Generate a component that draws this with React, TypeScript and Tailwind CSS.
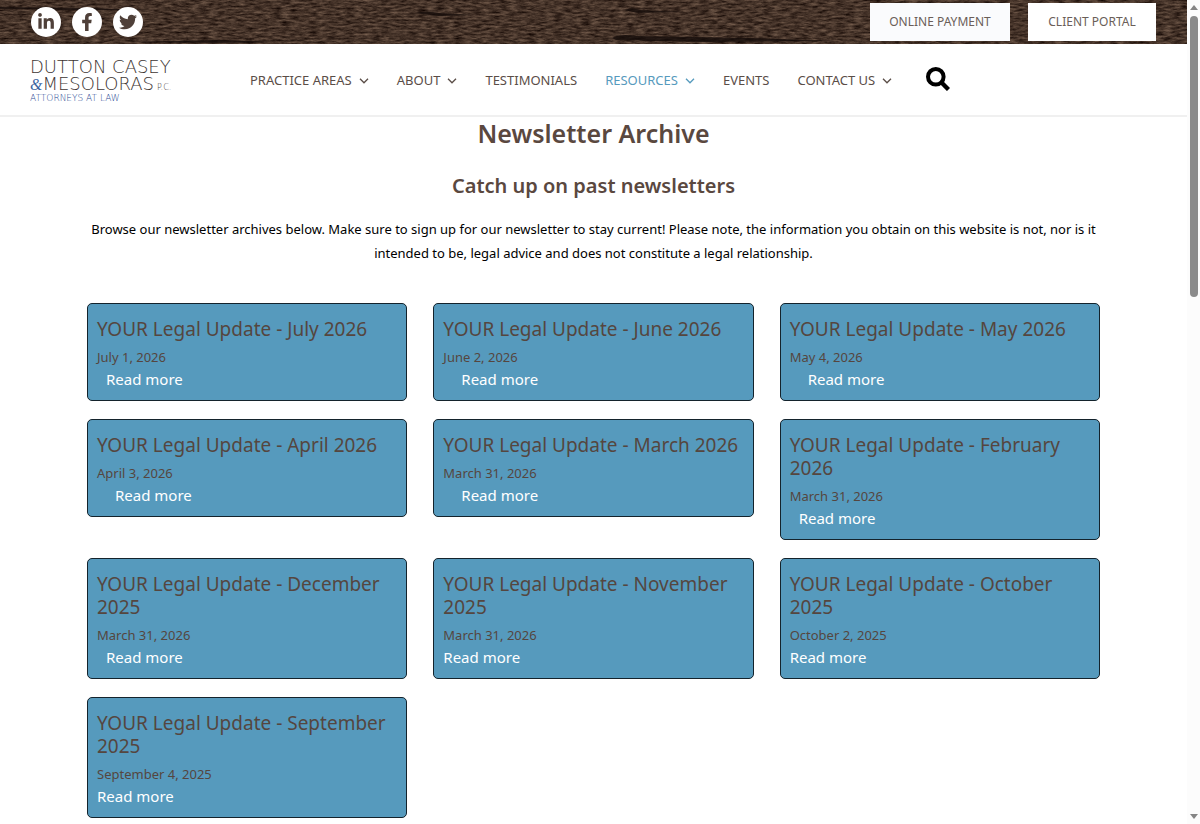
import { FaFacebookF, FaLinkedinIn, FaTwitter } from "react-icons/fa";

type NavItem = { label: string; menu?: boolean; active?: boolean };
type Issue = { month: string; date: string; indent: string };

const navItems: NavItem[] = [
  { label: "PRACTICE AREAS", menu: true },
  { label: "ABOUT", menu: true },
  { label: "TESTIMONIALS" },
  { label: "RESOURCES", menu: true, active: true },
  { label: "EVENTS" },
  { label: "CONTACT US", menu: true },
];

const issues: Issue[] = [
  { month: "July 2026", date: "July 1, 2026", indent: "pl-[9px]" },
  { month: "June 2026", date: "June 2, 2026", indent: "pl-[18px]" },
  { month: "May 2026", date: "May 4, 2026", indent: "pl-[18px]" },
  { month: "April 2026", date: "April 3, 2026", indent: "pl-[18px]" },
  { month: "March 2026", date: "March 31, 2026", indent: "pl-[18px]" },
  { month: "February 2026", date: "March 31, 2026", indent: "pl-[9px]" },
  { month: "December 2025", date: "March 31, 2026", indent: "pl-[9px]" },
  { month: "November 2025", date: "March 31, 2026", indent: "pl-0" },
  { month: "October 2025", date: "October 2, 2025", indent: "pl-0" },
  { month: "September 2025", date: "September 4, 2025", indent: "pl-0" },
];

const socials = [
  { name: "LinkedIn", Icon: FaLinkedinIn },
  { name: "Facebook", Icon: FaFacebookF },
  { name: "Twitter", Icon: FaTwitter },
];

function WoodGrain() {
  return (
    <svg className="absolute inset-0 h-full w-full" aria-hidden="true">
      <filter id="grain" x="0" y="0" width="100%" height="100%" colorInterpolationFilters="sRGB">
        <feTurbulence type="fractalNoise" baseFrequency="0.11 0.5" numOctaves="4" seed="8" />
        <feColorMatrix values="0.48 0 0 0 0.03  0.42 0 0 0 -0.01  0.36 0 0 0 -0.02  0 0 0 0 1" />
      </filter>
      <rect width="100%" height="100%" filter="url(#grain)" />
      <g fill="#120a08" opacity="0.75">
        <path d="M415 13q12-3 24 0l35 2-36 1z" />
        <path d="M612 38q8-5 24-2l110 2 90 3-130 1-90-2z" />
        <path d="M624 10q8-3 16 0l44 2-46 1z" />
        <path d="M0 7l90 1 60 2-80 0-70-1zM130 42l90-2 60 2-60 1z" />
      </g>
    </svg>
  );
}

function Chevron() {
  return (
    <svg viewBox="0 0 10 6" className="h-[6px] w-[10px]" fill="none" stroke="currentColor" strokeWidth="1.3" aria-hidden="true">
      <path d="M1 .8 5 4.8 9 .8" />
    </svg>
  );
}

function Header() {
  return (
    <header>
      <div className="relative bg-[#3f2d25]">
        <WoodGrain />
        <div className="relative flex h-11 items-center justify-between pr-[31px] pl-[31px]">
          <div className="flex gap-[11px]">
            {socials.map(({ name, Icon }) => (
              <a key={name} href="#" aria-label={name} className="flex size-[30px] items-center justify-center rounded-full bg-white text-[#4f4039]">
                <Icon className="size-[18px]" />
              </a>
            ))}
          </div>
          <div className="flex gap-[18px] text-[12px] text-[#6a5e58]">
            <a href="#" className="flex h-[38px] w-[140px] items-center justify-center bg-[#fafbfd]">ONLINE PAYMENT</a>
            <a href="#" className="flex h-[38px] w-[128px] items-center justify-center bg-white">CLIENT PORTAL</a>
          </div>
        </div>
      </div>
      <div className="flex items-center border-b-2 border-[#f0f0f0] pt-[14px] pb-[11px] pl-[30px]">
        <a href="#" className="w-[220px] shrink-0 font-['DejaVu_Sans'] font-extralight text-[#3d3532]">
          <span className="block text-[18px] leading-[17px] whitespace-nowrap">DUTTON CASEY</span>
          <span className="flex h-[17px] items-baseline text-[18px] leading-[17px]">
            <span className="font-['Liberation_Serif'] text-[16px] text-[#3d64a0] italic">&amp;</span>
            MESOLORAS
            <span className="pl-[3px] text-[8px]">P.C.</span>
          </span>
          <span className="block text-[9px] leading-[12px] text-[#2a4a94]">ATTORNEYS AT LAW</span>
        </a>
        <nav className="flex items-center gap-[28px] text-[13px] text-[#5a4d47]">
          {navItems.map((item) => (
            <a key={item.label} href="#" className={`flex items-center gap-[7px] whitespace-nowrap ${item.active ? "text-[#569abd]" : ""}`}>
              {item.label}
              {item.menu && <Chevron />}
            </a>
          ))}
        </nav>
        <button type="button" aria-label="Search" className="mb-1 ml-[34px] text-black">
          <svg viewBox="0 0 24 24" className="size-6" fill="none" stroke="currentColor" aria-hidden="true">
            <circle cx="9.8" cy="9.8" r="7.8" strokeWidth="4" />
            <path d="m15.5 15.5 7 7" strokeWidth="4.4" />
          </svg>
        </button>
      </div>
    </header>
  );
}

function IssueCard({ month, date, indent }: Issue) {
  return (
    <article className="rounded-[5px] border border-[#14232c] bg-[#569abd] px-[9px] pt-[14px] pb-[9px] text-[#55463f]">
      <h3 className="text-[19px] leading-[23px]">YOUR Legal Update - {month}</h3>
      <p className="mt-[6px] text-[13px] leading-5">{date}</p>
      <a href="#" className={`block text-[15px] leading-6 text-white ${indent}`}>Read more</a>
    </article>
  );
}

function Scrollbar() {
  return (
    <div className="sticky top-0 flex h-screen w-[13px] shrink-0 flex-col items-center bg-[#fcfcfc] py-[5px]" aria-hidden="true">
      <svg viewBox="0 0 8 5" className="h-[5px] w-2" fill="#858585"><path d="M4 0 8 5H0z" /></svg>
      <div className="mt-[6px] h-[281px] w-2 rounded-full bg-[#8b8b8b]" />
      <svg viewBox="0 0 8 5" className="mt-auto h-[5px] w-2" fill="#858585"><path d="M4 5 8 0H0z" /></svg>
    </div>
  );
}

export default function App() {
  return (
    <div className="flex min-h-screen bg-white font-['Noto_Sans',sans-serif]">
      <div className="min-w-0 flex-1">
        <Header />
        <main className="px-[87px] pb-[6px] text-center">
          <h1 className="text-[25px] leading-8 font-semibold text-[#5a483f]">Newsletter Archive</h1>
          <h2 className="mt-[21px] text-[20px] leading-8 font-semibold text-[#5a483f]">Catch up on past newsletters</h2>
          <p className="mt-[15px] text-[13px] leading-6 text-black">
            Browse our newsletter archives below. Make sure to sign up for our newsletter to stay current! Please note, the information you obtain on this website is not, nor is it intended to be, legal advice and does not constitute a legal relationship.
          </p>
          <section className="mt-[38px] grid grid-cols-3 items-start gap-x-[26px] gap-y-[18px] text-left">
            {issues.map((issue) => (
              <IssueCard key={issue.month} {...issue} />
            ))}
          </section>
        </main>
      </div>
      <Scrollbar />
    </div>
  );
}
